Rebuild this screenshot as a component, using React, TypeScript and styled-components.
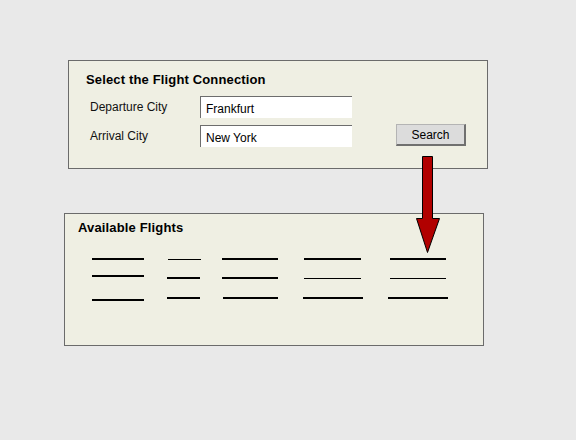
import React, { FC } from 'react'
import styled, { createGlobalStyle } from 'styled-components'

const GlobalStyle = createGlobalStyle`
    html, body {
        margin: 0;
        padding: 0;
        background: #e9e9e9;
        font-family: "Liberation Sans", Arial, sans-serif;
    }
`

const Page = styled.div`
    position: relative;
    width: 576px;
    height: 440px;
    padding-top: 60px;
    box-sizing: border-box;
`

interface IPanel {
    $left: number
    $height: number
    $top?: number
}

const Panel = styled.div<IPanel>`
    box-sizing: border-box;
    width: 420px;
    height: ${props => props.$height}px;
    margin-left: ${props => props.$left}px;
    margin-top: ${props => props.$top || 0}px;
    background: #efefe3;
    border: 1px solid #6b6b6b;
`

interface ITitle {
    $padTop: number
    $padLeft: number
}

const Title = styled.div<ITitle>`
    padding: ${props => props.$padTop}px 0 0 ${props => props.$padLeft}px;
    font-size: 13px;
    font-weight: bold;
    line-height: 16px;
    letter-spacing: 0.15px;
    color: #000;
`

const Form = styled.div`
    display: grid;
    grid-template-columns: 110px 152px 1fr;
    grid-template-rows: 22px 22px;
    row-gap: 7px;
    align-items: center;
    margin: 8px 0 0 21px;
`

const Label = styled.div`
    font-size: 12px;
    color: #111;
`

const TextBox = styled.div`
    box-sizing: border-box;
    height: 22px;
    padding: 5px 0 0 5px;
    background: #fff;
    border-top: 1px solid #6d6d6d;
    border-left: 1px solid #6d6d6d;
    font-size: 12px;
    line-height: 14px;
    color: #000;
`

const ButtonCell = styled.div`
    padding-left: 44px;
    margin-top: -2px;
`

const Button = styled.div`
    box-sizing: border-box;
    width: 70px;
    height: 22px;
    display: flex;
    align-items: center;
    justify-content: center;
    background: #dcdcdc;
    border-top: 1px solid #b4b4b4;
    border-left: 1px solid #b4b4b4;
    border-right: 2px solid #707070;
    border-bottom: 2px solid #707070;
    font-size: 12px;
    color: #000;
`

const LineGrid = styled.div`
    display: grid;
    grid-template-columns: 75px 55px 81px 85px 60px;
    margin: 22px 0 0 27px;
`

const LineCol = styled.div`
    display: flex;
    flex-direction: column;
`

interface ILine {
    $w: number
    $t: number
    $dx: number
    $mt: number
}

const Line = styled.div<ILine>`
    width: ${props => props.$w}px;
    height: ${props => props.$t}px;
    margin-left: ${props => props.$dx}px;
    margin-top: ${props => props.$mt}px;
    background: #000;
`

const ArrowSvg = styled.svg`
    position: absolute;
    left: 416px;
    top: 155px;
`

// [top, dx, width, thickness] relative to the first row
const columns = [
    [[0, 0, 52, 2], [17, 0, 52, 2], [41, 0, 52, 2]],
    [[1, 1, 33, 1], [19, 0, 33, 2], [39, 0, 33, 2]],
    [[0, 0, 56, 2], [19, 0, 56, 2], [39, 1, 55, 2]],
    [[0, 1, 57, 2], [20, 1, 57, 1], [39, 0, 60, 2]],
    [[0, 2, 56, 2], [20, 2, 56, 1], [39, 0, 60, 2]],
]

const App: FC = () => {
    return (
        <Page>
            <GlobalStyle />
            <Panel $left={68} $height={109}>
                <Title $padTop={11} $padLeft={17}>Select the Flight Connection</Title>
                <Form>
                    <Label>Departure City</Label>
                    <TextBox>Frankfurt</TextBox>
                    <div />
                    <Label>Arrival City</Label>
                    <TextBox>New York</TextBox>
                    <ButtonCell>
                        <Button>Search</Button>
                    </ButtonCell>
                </Form>
            </Panel>
            <Panel $left={64} $height={133} $top={44}>
                <Title $padTop={6} $padLeft={13}>Available Flights</Title>
                <LineGrid>
                    {columns.map((col, i) => {
                        let bottom = 0
                        return (
                            <LineCol key={i}>
                                {col.map(([top, dx, w, t], j) => {
                                    const mt = top - bottom
                                    bottom = top + t
                                    return <Line key={j} $w={w} $t={t} $dx={dx} $mt={mt} />
                                })}
                            </LineCol>
                        )
                    })}
                </LineGrid>
            </Panel>
            <ArrowSvg width="25" height="99" viewBox="0 0 25 99">
                <path
                    d="M6.5 1.5 H16.5 V63.5 H23.5 L11.5 97.5 L0.5 63.5 H6.5 Z"
                    fill="#b10000"
                    stroke="#000"
                    strokeWidth="1"
                />
            </ArrowSvg>
        </Page>
    )
}

export default App
